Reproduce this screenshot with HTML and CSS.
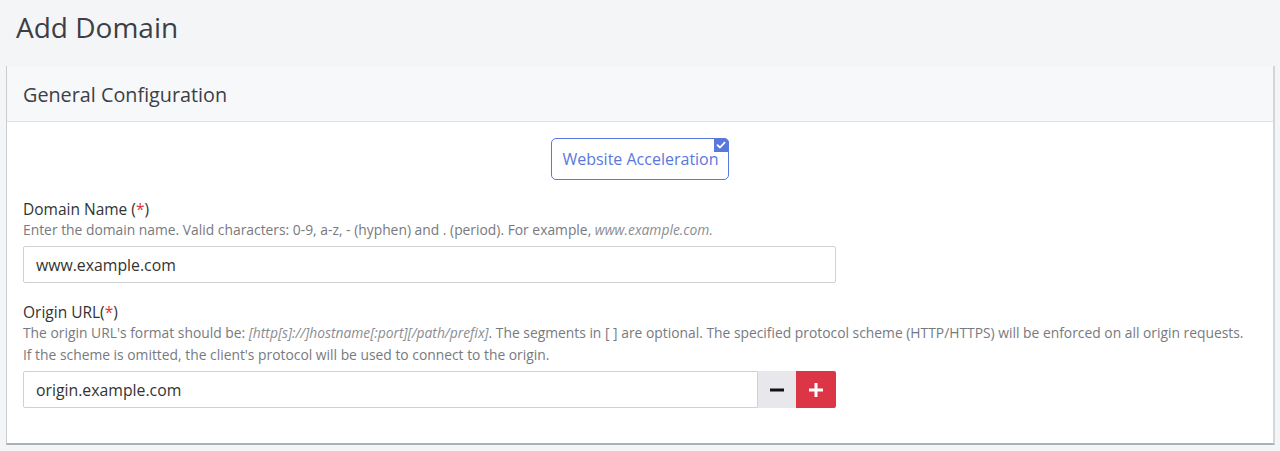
FILE: index.html
```html
<!DOCTYPE html>
<html lang="en">
  <head>
    <meta charset="UTF-8" />
    <meta name="viewport" content="width=device-width, initial-scale=1.0" />
    <title>Add Domain</title>
    <link rel="stylesheet" href="styles.css">
  </head>
  <body>
    <h1 class="page-title">Add Domain</h1>

    <div class="card">
      <div class="card-header">General Configuration</div>
      <div class="card-body">
        <div class="type-row">
          <label class="type-option checked">
            Website Acceleration
            <span class="check-badge">
              <svg width="10" height="10" viewBox="0 0 10 10">
                <path d="M1.5 5.2 L4 7.5 L8.6 2.6" fill="none" stroke="#fff" stroke-width="1.8" stroke-linecap="round" stroke-linejoin="round" />
              </svg>
            </span>
          </label>
        </div>

        <div class="field">
          <div class="field-label">Domain Name (<span class="req">*</span>)</div>
          <div class="field-help">Enter the domain name. Valid characters: 0-9, a-z, - (hyphen) and . (period). For example, <em>www.example.com.</em></div>
          <input class="text-input domain-input" type="text" value="www.example.com" />
        </div>

        <div class="field">
          <div class="field-label">Origin URL(<span class="req">*</span>)</div>
          <div class="field-help">The origin URL's format should be: <em>[http[s]://]hostname[:port][/path/prefix]</em>. The segments in [ ] are optional. The specified protocol scheme (HTTP/HTTPS) will be enforced on all origin requests.<br />If the scheme is omitted, the client's protocol will be used to connect to the origin.</div>
          <div class="origin-row">
            <input class="text-input origin-input" type="text" value="origin.example.com" />
            <button class="btn-minus">
              <svg width="14" height="14" viewBox="0 0 14 14"><rect x="0" y="5.5" width="14" height="3" fill="#111" /></svg>
            </button>
            <button class="btn-plus">
              <svg width="14" height="14" viewBox="0 0 14 14"><rect x="0" y="5.5" width="14" height="3" fill="#fff" /><rect x="5.5" y="0" width="3" height="14" fill="#fff" /></svg>
            </button>
          </div>
        </div>
      </div>
    </div>
  </body>
</html>
```

FILE: styles.css
```css
body {
  font-family: "Open Sans", Lato, sans-serif;
  margin: 0;
  padding: 0;
  background-color: #f4f5f7;
  color: #3a3c42;
}
.page-title {
  margin: 0;
  padding: 8px 16px 0 16px;
  height: 56px;
  box-sizing: border-box;
  font-size: 28px;
  font-weight: 400;
  color: #3d3f45;
}
.card {
  margin: 10px 5px 0 6px;
  background-color: white;
  border-left: 1px solid #c9cdd2;
  border-right: 2px solid #d3d6da;
  border-bottom: 2px solid #a9b1b9;
}
.card-header {
  background-color: #f7f8fa;
  height: 56px;
  box-sizing: border-box;
  padding: 15px 16px 0 16px;
  font-size: 19.8px;
  color: #3d3f45;
  border-bottom: 1px solid #dcdfe3;
}
.card-body {
  padding: 16px 16px 35px 16px;
}
.type-row {
  display: flex;
  justify-content: center;
  margin-bottom: 19px;
}
.type-option {
  position: relative;
  display: flex;
  align-items: center;
  height: 42px;
  box-sizing: border-box;
  padding: 0 9px 0 10px;
  border: 1px solid #5a78dc;
  border-radius: 5px;
  color: #5a78dc;
  font-size: 16px;
  cursor: pointer;
}
.check-badge {
  position: absolute;
  top: -1px;
  right: -1px;
  width: 15px;
  height: 14px;
  background-color: #5a78dc;
  border-radius: 0 5px 0 0;
  display: flex;
  align-items: center;
  justify-content: center;
}
.field {
  margin-bottom: 19px;
}
.field:last-child {
  margin-bottom: 0;
}
.field-label {
  font-size: 15.5px;
  color: #333;
  line-height: 20px;
}
.req {
  color: #dc3545;
}
.field-help {
  font-size: 13.85px;
  color: #777a80;
  line-height: 22px;
  margin-bottom: 5px;
  white-space: nowrap;
}
.field-help em {
  color: #8a8d92;
}
.text-input {
  font-family: inherit;
  font-size: 15.8px;
  color: #333;
  height: 37px;
  box-sizing: border-box;
  padding: 0 12px;
  border: 1px solid #ced1d5;
  border-radius: 2px;
  outline: none;
}
.domain-input {
  width: 813px;
}
.origin-row {
  display: flex;
  width: 813px;
}
.origin-input {
  flex-grow: 1;
  border-radius: 2px 0 0 2px;
}
.btn-minus,
.btn-plus {
  height: 37px;
  border: none;
  display: flex;
  align-items: center;
  justify-content: center;
  cursor: pointer;
  padding: 0;
}
.btn-minus {
  background-color: #e8e7eb;
  width: 38px;
}
.btn-plus {
  background-color: #dc3545;
  width: 40px;
  border-radius: 0 2px 2px 0;
}
```
